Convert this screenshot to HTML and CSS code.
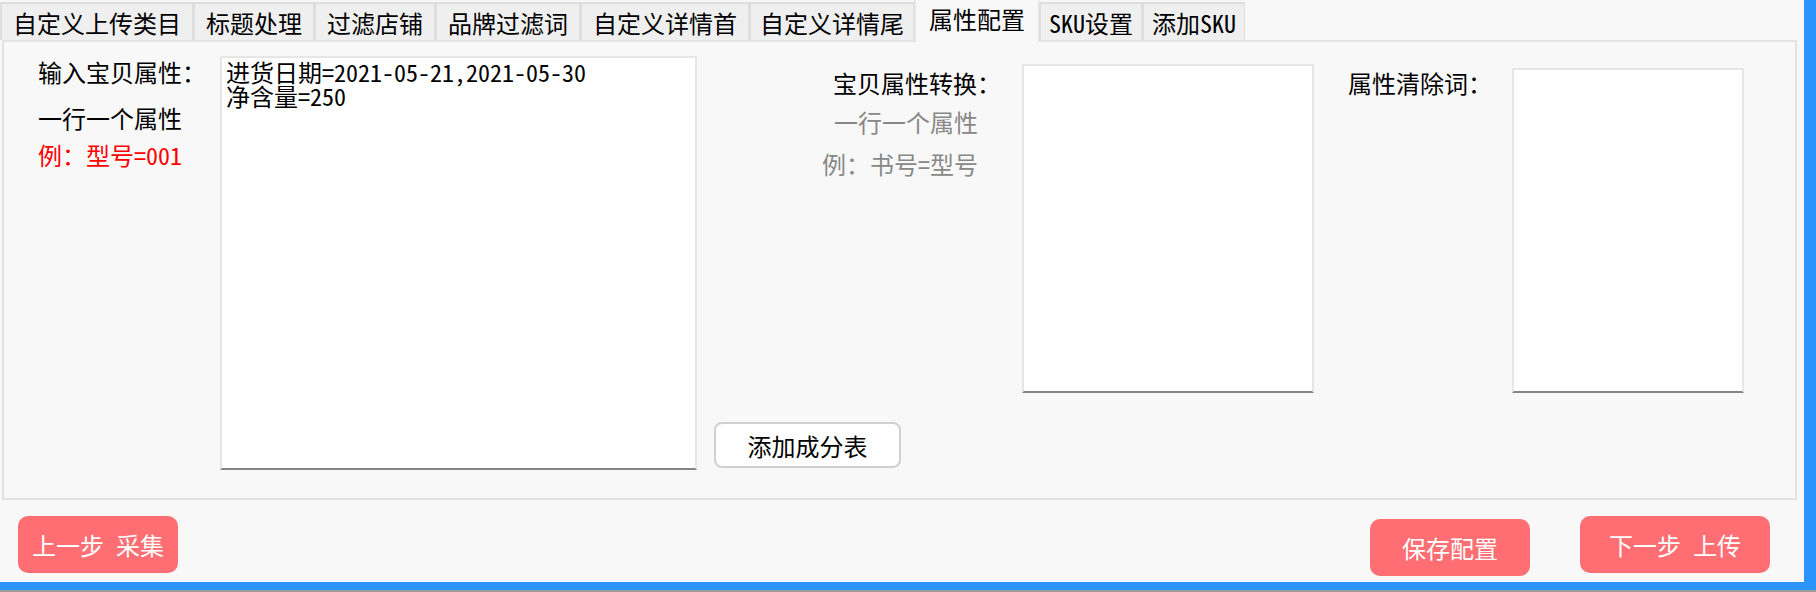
FILE: index.html
```html
<!DOCTYPE html>
<html lang="zh-CN">

<head>
  <meta charset="UTF-8" />
  <meta name="viewport" content="width=device-width, initial-scale=1.0" />
  <title>属性配置</title>
  <link rel="stylesheet" href="styles.css">
</head>

<body>
  <div class="window">
    <div class="tabs">
      <span class="tab">自定义上传类目</span><span class="tab">标题处理</span><span class="tab">过滤店铺</span><span
        class="tab">品牌过滤词</span><span class="tab">自定义详情首</span><span class="tab tab-tight">自定义详情尾</span><span
        class="tab active">属性配置</span><span class="tab tab-narrow">SKU设置</span><span
        class="tab tab-narrow">添加SKU</span>
    </div>
    <div class="panel">
      <div class="col-labels">
        <p class="label">输入宝贝属性：</p>
        <p class="label">一行一个属性</p>
        <p class="label red">例：型号=001</p>
      </div>
      <textarea class="box box-main" spellcheck="false">进货日期=2021-05-21,2021-05-30
净含量=250</textarea>
      <div class="col-mid">
        <div class="mid-labels">
          <p class="label">宝贝属性转换：</p>
          <p class="hint">一行一个属性</p>
          <p class="hint">例：书号=型号</p>
        </div>
        <button class="btn-plain">添加成分表</button>
      </div>
      <textarea class="box box-convert"></textarea>
      <p class="label label-clear">属性清除词：</p>
      <textarea class="box box-clear"></textarea>
    </div>
    <div class="footer">
      <button class="btn-red">上一步 采集</button>
      <div class="footer-right">
        <button class="btn-red btn-save">保存配置</button>
        <button class="btn-red btn-next">下一步 上传</button>
      </div>
    </div>
  </div>
</body>

</html>
```

FILE: styles.css
```css
:root {
  --bg: #f8f8f8;
  --blue: #2a94fc;
  --line: #e3e3e3;
  --red: #fe6e73;
  --font: "Noto Sans Mono CJK SC", "Noto Sans CJK SC", sans-serif;
}

html,
body {
  margin: 0;
  padding: 0;
  background-color: #9c9c9c;
}

.window {
  width: 1816px;
  height: 590px;
  box-sizing: border-box;
  border-right: 12px solid var(--blue);
  border-bottom: 8px solid var(--blue);
  background-color: var(--bg);
  display: flex;
  flex-direction: column;
  font-family: var(--font);
  font-size: 24px;
  color: #000;
}

/* tab bar */
.tabs {
  height: 40px;
  display: flex;
  align-items: flex-end;
}

.tab {
  height: 36px;
  line-height: 38px;
  padding: 0 11px;
  border: 2px solid #dedede;
  border-bottom: none;
  border-right-width: 1px;
  background-color: #efefef;
  white-space: nowrap;
}

.tab.tab-tight {
  padding: 0 9px;
}

.tab.tab-narrow {
  padding: 0 8px;
}

.tab.active {
  height: 42px;
  line-height: 38px;
  margin-bottom: -2px;
  padding: 0 13px;
  background-color: var(--bg);
  border-color: #e6e6e6;
  position: relative;
  z-index: 1;
}

/* main panel */
.panel {
  height: 460px;
  box-sizing: border-box;
  margin: 0 7px 0 2px;
  border: 2px solid var(--line);
  display: flex;
  align-items: flex-start;
}

.label,
.hint {
  margin: 0;
  white-space: nowrap;
}

.col-labels {
  width: 182px;
  margin-left: 34px;
  margin-top: 7px;
}

.col-labels .label {
  line-height: 46px;
}

.col-labels .red {
  color: #ff0000;
  line-height: 28px;
}

.box {
  box-sizing: border-box;
  margin: 0;
  padding: 2px 4px;
  border: 2px solid #e6e6e6;
  border-bottom-color: #858585;
  background-color: #fff;
  font-family: var(--font);
  font-size: 24px;
  line-height: 24px;
  color: #000;
  resize: none;
  outline: none;
  overflow: hidden;
}

.box-main {
  width: 477px;
  height: 414px;
  margin-top: 14px;
}

.col-mid {
  width: 325px;
  height: 100%;
  box-sizing: border-box;
  padding: 0 21px 30px 17px;
  display: flex;
  flex-direction: column;
}

.mid-labels {
  margin-top: 23px;
  text-align: right;
}

.mid-labels .label {
  line-height: 36px;
}

.hint {
  color: #888;
  line-height: 42px;
  padding-right: 23px;
}

.btn-plain {
  margin-top: auto;
  width: 187px;
  height: 46px;
  border: 2px solid #d0d0d0;
  border-radius: 8px;
  background-color: #fff;
  font-family: var(--font);
  font-size: 24px;
  color: #000;
  padding: 0;
}

.box-convert {
  width: 292px;
  height: 329px;
  margin-top: 22px;
}

.label-clear {
  width: 144px;
  margin-left: 34px;
  margin-top: 23px;
  line-height: 36px;
}

.box-clear {
  width: 232px;
  height: 325px;
  margin-top: 26px;
  margin-left: 20px;
}

/* footer buttons */
.footer {
  flex: 1;
  display: flex;
  align-items: flex-start;
  justify-content: space-between;
  padding: 16px 34px 0 18px;
}

.footer-right {
  display: flex;
  align-items: flex-start;
  gap: 50px;
}

.btn-red {
  height: 57px;
  width: 160px;
  border: none;
  border-radius: 10px;
  background-color: var(--red);
  color: #fff;
  font-family: var(--font);
  font-size: 24px;
  padding: 0;
  white-space: pre;
}

.btn-save {
  margin-top: 3px;
}

.btn-next {
  width: 190px;
}
```
